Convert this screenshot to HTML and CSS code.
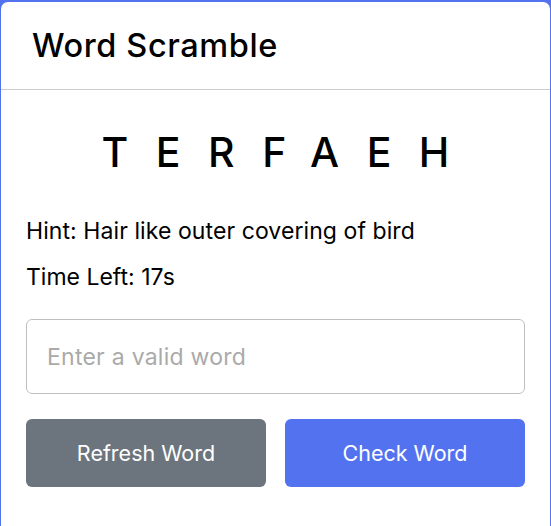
FILE: index.html
```html
<!DOCTYPE html>
<html lang="en">
<head>
<meta charset="utf-8">
<title>Word Scramble</title>
<link rel="stylesheet" href="styles.css">
</head>
<body>
<div class="container">
  <h2 class="title">Word Scramble</h2>
  <div class="content">
    <p class="word">terfaeh</p>
    <div class="details">
      <p class="hint">Hint: <span>Hair like outer covering of bird</span></p>
      <p class="time">Time Left: <span><b>17</b>s</span></p>
    </div>
    <input class="field" type="text" spellcheck="false" placeholder="Enter a valid word">
    <div class="buttons">
      <button class="btn refresh-word">Refresh Word</button>
      <button class="btn check-word">Check Word</button>
    </div>
  </div>
</div>
</body>
</html>
```
FILE: styles.css
```css
* {
  margin: 0;
  padding: 0;
  box-sizing: border-box;
  font-family: "Inter", "Open Sans", sans-serif;
}
body {
  background: #5372F0;
  padding: 2px 1px 0 1px;
  height: 526px;
  overflow: hidden;
}
.container {
  width: 549px;
  background: #fff;
  border-radius: 7px;
  padding-bottom: 40px;
}
.title {
  font-size: 32.5px;
  font-weight: 500;
  line-height: 47px;
  letter-spacing: 0.6px;
  padding: 20px 31px;
  border-bottom: 1px solid #ccc;
  color: #000;
}
.content {
  margin: 31px 25px 44px;
}
.word {
  font-size: 41px;
  font-weight: 500;
  line-height: 62px;
  text-align: center;
  letter-spacing: 27.5px;
  margin-right: -27.5px;
  text-transform: uppercase;
  color: #000;
}
.details {
  margin: 31px 0 25px;
}
.details p {
  font-size: 23px;
  line-height: 34px;
  color: #000;
}
.details p + p {
  margin-top: 12px;
}
.details .hint {
  letter-spacing: 0.08px;
}
.details b {
  font-weight: 400;
}
.field {
  display: block;
  width: 100%;
  height: 75px;
  padding: 0 20px;
  font-size: 23px;
  letter-spacing: 0.25px;
  border: 1px solid #bfbfbf;
  border-radius: 6px;
  outline: none;
  color: #000;
}
.field::placeholder {
  color: #aaa;
}
.buttons {
  display: flex;
  justify-content: space-between;
  margin-top: 25px;
}
.btn {
  width: 240px;
  height: 68px;
  border: none;
  border-radius: 6px;
  color: #fff;
  font-size: 21.5px;
  cursor: pointer;
}
.refresh-word {
  background: #6C757D;
}
.check-word {
  background: #5372F0;
}
```
